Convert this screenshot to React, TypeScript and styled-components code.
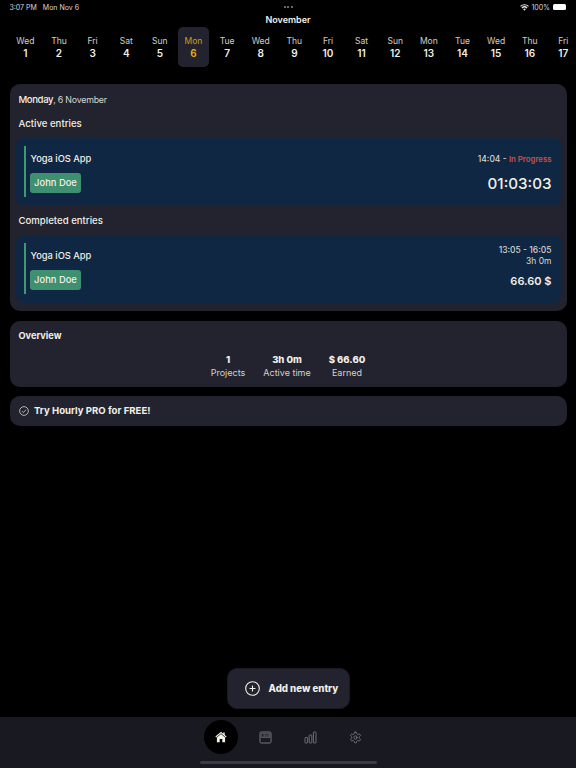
import { createGlobalStyle, styled } from "styled-components"

const GlobalStyle = createGlobalStyle`
	html, body {
		margin: 0;
		padding: 0;
		background: #000;
	}
	body {
		font-family: Inter, "Liberation Sans", sans-serif;
		color: #f2efe6;
		-webkit-font-smoothing: antialiased;
	}
`

const days = [
	["Wed", 1], ["Thu", 2], ["Fri", 3], ["Sat", 4], ["Sun", 5], ["Mon", 6],
	["Tue", 7], ["Wed", 8], ["Thu", 9], ["Fri", 10], ["Sat", 11], ["Sun", 12],
	["Mon", 13], ["Tue", 14], ["Wed", 15], ["Thu", 16], ["Fri", 17],
] as const

const Page = styled.div`
	width: 576px;
	height: 768px;
	background: #000;
	display: flex;
	flex-direction: column;
	overflow: hidden;
`

const StatusBar = styled.div`
	height: 14px;
	padding: 0 9px 0 9.5px;
	display: grid;
	grid-template-columns: 1fr auto 1fr;
	align-items: center;
	font-size: 7px;
	color: #d8d8d8;
`

const StatusLeft = styled.div`
	display: flex;
	gap: 6px;
`

const Dots = styled.div`
	display: flex;
	gap: 1.5px;

	span {
		width: 2px;
		height: 2px;
		border-radius: 50%;
		background: #8a8a8a;
	}
`

const StatusRight = styled.div`
	display: flex;
	justify-content: flex-end;
	align-items: center;
	gap: 2px;
`

const Battery = styled.div`
	width: 13px;
	height: 6px;
	border-radius: 1.5px;
	background: #fff;
	margin-left: 1px;
	margin-right: 1px;
`

const Month = styled.div`
	height: 13px;
	line-height: 12px;
	text-align: center;
	font-size: 9px;
	font-weight: 600;
`

const DayStrip = styled.div`
	display: flex;
	height: 40px;
	padding-left: 10px;
`

const Day = styled.div<{ $active?: boolean }>`
	flex: 0 0 30.7px;
	margin-right: 2.95px;
	border-radius: 5px;
	display: flex;
	flex-direction: column;
	align-items: center;
	padding-top: 8px;
	box-sizing: border-box;
	background: ${(p) => (p.$active ? "#23232f" : "transparent")};
	color: ${(p) => (p.$active ? "#e8b30e" : "#f2efe6")};
`

const DayName = styled.div`
	font-size: 8.5px;
	line-height: 12px;
	opacity: 0.85;
`

const DayNumber = styled.div`
	font-size: 10px;
	line-height: 12px;
	font-weight: 600;
`

const Content = styled.div`
	margin-top: 17px;
	padding: 0 9.5px;
	display: flex;
	flex-direction: column;
	gap: 9.5px;
	flex: 1;
`

const Panel = styled.section`
	background: #23232f;
	border-radius: 10px;
	padding: 9px;
`

const DayPanel = styled(Panel)`
	height: 227px;
	box-sizing: border-box;
	padding: 10px 6px 0 6.5px;
`

const DateLine = styled.div`
	font-size: 8.8px;
	line-height: 11px;
	letter-spacing: -0.2px;
	padding-left: 2.5px;
	color: #d8d6ce;

	b {
		font-size: 9.6px;
		font-weight: 500;
		letter-spacing: -0.4px;
		color: #f2efe6;
	}
`

const SectionTitle = styled.div`
	font-size: 9.6px;
	line-height: 12px;
	font-weight: 500;
	padding-left: 2.5px;
	margin-top: 13px;
	margin-bottom: 8px;
`

const SectionTitleTight = styled(SectionTitle)`
	margin-top: 9px;
`

const EntryCard = styled.div`
	background: #0f2743;
	border-radius: 8px;
	height: 68px;
	box-sizing: border-box;
	padding: 8px 9px 9px 8px;
	display: flex;
	justify-content: space-between;
`

const EntryLeft = styled.div`
	border-left: 2px solid #3f9a72;
	padding-left: 4px;
	display: flex;
	flex-direction: column;
	align-items: flex-start;
`

const ProjectName = styled.div`
	font-size: 9.3px;
	line-height: 12px;
	font-weight: 500;
	margin-top: 7px;
	margin-left: 0.5px;
`

const ClientTag = styled.div`
	margin-top: 8px;
	background: #3f9070;
	border-radius: 3px;
	height: 20px;
	width: 51px;
	font-size: 9.4px;
	font-weight: 500;
	line-height: 20px;
	text-align: center;
`

const EntryRight = styled.div`
	display: flex;
	flex-direction: column;
	align-items: flex-end;
	font-size: 8.5px;
	line-height: 11px;
	color: #d8d6ce;
`

const TimeRow = styled.div<{ $top: number }>`
	margin-top: ${(p) => p.$top}px;
	font-weight: 500;
`

const Status = styled.span`
	color: #c4554e;
	font-size: 7.8px;
	font-weight: 600;
`

const Timer = styled.div`
	margin-top: 9px;
	font-size: 15.2px;
	line-height: 19px;
	font-weight: 500;
	color: #f2efe6;
`

const Amount = styled.div`
	margin-top: 7px;
	font-size: 11px;
	line-height: 14px;
	font-weight: 600;
	color: #f2efe6;
`

const OverviewPanel = styled(Panel)`
	height: 66px;
	box-sizing: border-box;
	padding-top: 9px;
`

const PanelTitle = styled.div`
	font-size: 9.2px;
	line-height: 12px;
	font-weight: 700;
`

const Stats = styled.div`
	margin-top: 11px;
	display: flex;
	justify-content: center;
	gap: 18px;
`

const Stat = styled.div`
	display: flex;
	flex-direction: column;
	align-items: center;
`

const StatValue = styled.div`
	font-size: 9.5px;
	line-height: 13px;
	font-weight: 800;
`

const StatLabel = styled.div`
	font-size: 9px;
	line-height: 13px;
	color: #d4d2cb;
`

const ProBanner = styled.div`
	height: 29.5px;
	background: #23232f;
	border-radius: 10px;
	padding: 0 9.5px;
	display: flex;
	align-items: center;
	gap: 5px;
	font-size: 9.6px;
	font-weight: 700;
`

const AddButton = styled.div`
	align-self: center;
	width: 123px;
	height: 41px;
	margin-top: auto;
	margin-bottom: 8px;
	background: #23232f;
	border: 1px solid #1a1a22;
	border-radius: 10px;
	display: flex;
	align-items: center;
	gap: 9px;
	padding-left: 17px;
	box-sizing: border-box;
	font-size: 9.7px;
	font-weight: 800;
`

const TabBar = styled.nav`
	position: relative;
	height: 51px;
	background: #191922;
	display: flex;
	justify-content: center;
	align-items: flex-start;
	gap: 11px;
	padding-top: 3px;
	box-sizing: border-box;
`

const TabItem = styled.div<{ $active?: boolean }>`
	width: 34px;
	height: 34px;
	border-radius: 50%;
	background: ${(p) => (p.$active ? "#000" : "transparent")};
	display: flex;
	align-items: center;
	justify-content: center;
`

const HomeIndicator = styled.div`
	position: absolute;
	left: 199.5px;
	bottom: 4px;
	width: 177px;
	height: 3px;
	border-radius: 2px;
	background: #3c3c44;
`

const WifiIcon = () => (
	<svg width="9" height="7" viewBox="0 0 10 8">
		<path d="M5 7.6 3.4 5.8a2.3 2.3 0 0 1 3.2 0zM2.6 5 1.6 3.9a4.9 4.9 0 0 1 6.8 0L7.4 5a3.5 3.5 0 0 0-4.8 0zM.9 3.2 0 2.2a7.2 7.2 0 0 1 10 0l-.9 1a5.9 5.9 0 0 0-8.2 0z" fill="#e8e8e8" />
	</svg>
)

const CheckCircle = () => (
	<svg width="10" height="10" viewBox="0 0 11 11" fill="none" stroke="#e8e6df" strokeWidth="0.8">
		<circle cx="5.5" cy="5.5" r="4.8" />
		<path d="M3.3 5.7 4.9 7.2 7.7 4" />
	</svg>
)

const PlusCircle = () => (
	<svg width="15" height="15" viewBox="0 0 15 15" fill="none" stroke="#f2efe6" strokeWidth="1.1">
		<circle cx="7.5" cy="7.5" r="6.8" />
		<path d="M7.5 4.5v6M4.5 7.5h6" />
	</svg>
)

const HomeIcon = () => (
	<svg width="12" height="12" viewBox="0 0 12 12">
		<path d="M6 .8 0.4 5.6l.7.8L6 2.3l4.9 4.1.7-.8L9.7 4V1.4H8.3v1.4z" fill="#f5f2e8" />
		<path d="M1.9 6.5 6 3.1l4.1 3.4v4.7H7.3V8H4.7v3.2H1.9z" fill="#f5f2e8" />
	</svg>
)

const LogIcon = () => (
	<svg width="13" height="13" viewBox="0 0 13 13" fill="none" stroke="#77777c" strokeWidth="1">
		<rect x="1" y="1" width="11" height="11" rx="1.2" />
		<rect x="2" y="2" width="9" height="5" fill="#55555c" stroke="none" />
		<path d="M5.5 3.3h4.5M5.5 5h4.5" stroke="#1b1b24" strokeWidth="0.7" />
		<rect x="2.8" y="2.8" width="1.6" height="2.8" fill="#1b1b24" stroke="none" />
	</svg>
)

const ChartIcon = () => (
	<svg width="13" height="13" viewBox="0 0 13 13" fill="none" stroke="#77777c" strokeWidth="0.9">
		<rect x="1" y="6.5" width="2.6" height="5.5" rx="0.6" />
		<rect x="5.2" y="4" width="2.6" height="8" rx="0.6" />
		<rect x="9.4" y="1" width="2.6" height="11" rx="0.6" />
	</svg>
)

const GearIcon = () => (
	<svg width="13" height="13" viewBox="0 0 24 24" fill="none" stroke="#77777c" strokeWidth="1.7" strokeLinecap="round" strokeLinejoin="round">
		<path d="M12.22 2h-.44a2 2 0 0 0-2 2v.18a2 2 0 0 1-1 1.73l-.43.25a2 2 0 0 1-2 0l-.15-.08a2 2 0 0 0-2.73.73l-.22.38a2 2 0 0 0 .73 2.73l.15.1a2 2 0 0 1 1 1.72v.51a2 2 0 0 1-1 1.74l-.15.09a2 2 0 0 0-.73 2.73l.22.38a2 2 0 0 0 2.73.73l.15-.08a2 2 0 0 1 2 0l.43.25a2 2 0 0 1 1 1.73V20a2 2 0 0 0 2 2h.44a2 2 0 0 0 2-2v-.18a2 2 0 0 1 1-1.73l.43-.25a2 2 0 0 1 2 0l.15.08a2 2 0 0 0 2.73-.73l.22-.39a2 2 0 0 0-.73-2.73l-.15-.08a2 2 0 0 1-1-1.74v-.5a2 2 0 0 1 1-1.74l.15-.09a2 2 0 0 0 .73-2.73l-.22-.38a2 2 0 0 0-2.73-.73l-.15.08a2 2 0 0 1-2 0l-.43-.25a2 2 0 0 1-1-1.73V4a2 2 0 0 0-2-2z" />
		<circle cx="12" cy="12" r="3" />
	</svg>
)

const App = () => {
	return (
		<Page>
			<GlobalStyle />
			<StatusBar>
				<StatusLeft>
					<span>3:07 PM</span>
					<span>Mon Nov 6</span>
				</StatusLeft>
				<Dots>
					<span />
					<span />
					<span />
				</Dots>
				<StatusRight>
					<WifiIcon />
					<span>100%</span>
					<Battery />
				</StatusRight>
			</StatusBar>
			<Month>November</Month>
			<DayStrip>
				{days.map(([name, num]) => (
					<Day key={num} $active={num === 6}>
						<DayName>{name}</DayName>
						<DayNumber>{num}</DayNumber>
					</Day>
				))}
			</DayStrip>
			<Content>
				<DayPanel>
					<DateLine>
						<b>Monday</b>, 6 November
					</DateLine>
					<SectionTitle>Active entries</SectionTitle>
					<EntryCard>
						<EntryLeft>
							<ProjectName>Yoga iOS App</ProjectName>
							<ClientTag>John Doe</ClientTag>
						</EntryLeft>
						<EntryRight>
							<TimeRow $top={8}>
								14:04 - <Status>In Progress</Status>
							</TimeRow>
							<Timer>01:03:03</Timer>
						</EntryRight>
					</EntryCard>
					<SectionTitleTight>Completed entries</SectionTitleTight>
					<EntryCard>
						<EntryLeft>
							<ProjectName>Yoga iOS App</ProjectName>
							<ClientTag>John Doe</ClientTag>
						</EntryLeft>
						<EntryRight>
							<TimeRow $top={1.5}>13:05 - 16:05</TimeRow>
							<div>3h 0m</div>
							<Amount>66.60 $</Amount>
						</EntryRight>
					</EntryCard>
				</DayPanel>
				<OverviewPanel>
					<PanelTitle>Overview</PanelTitle>
					<Stats>
						<Stat>
							<StatValue>1</StatValue>
							<StatLabel>Projects</StatLabel>
						</Stat>
						<Stat>
							<StatValue>3h 0m</StatValue>
							<StatLabel>Active time</StatLabel>
						</Stat>
						<Stat>
							<StatValue>$ 66.60</StatValue>
							<StatLabel>Earned</StatLabel>
						</Stat>
					</Stats>
				</OverviewPanel>
				<ProBanner>
					<CheckCircle />
					Try Hourly PRO for FREE!
				</ProBanner>
				<AddButton>
					<PlusCircle />
					Add new entry
				</AddButton>
			</Content>
			<TabBar>
				<TabItem $active>
					<HomeIcon />
				</TabItem>
				<TabItem>
					<LogIcon />
				</TabItem>
				<TabItem>
					<ChartIcon />
				</TabItem>
				<TabItem>
					<GearIcon />
				</TabItem>
				<HomeIndicator />
			</TabBar>
		</Page>
	)
}

export default App
